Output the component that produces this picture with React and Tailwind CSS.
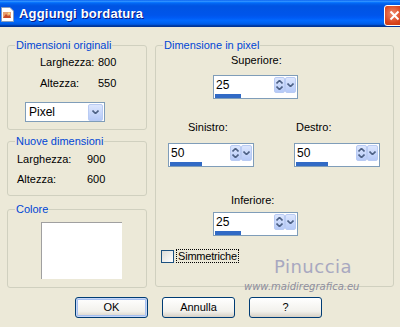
import React from 'react';

const font = "font-['Liberation_Sans',Arial,sans-serif]";

// small chevron used in the combo and spinner buttons
const Chevron = ({ up = false }) => (
  <svg width="7" height="4" viewBox="0 0 7 4" className={up ? 'rotate-180' : ''}>
    <path d="M0.5 0.5 L3.5 3.5 L6.5 0.5" fill="none" stroke="#4D6185" strokeWidth="1.6" />
  </svg>
);

const ComboButton = ({ className = '' }) => (
  <div
    className={`flex items-center justify-center rounded-[2px] border border-[#B9CBF3] bg-[linear-gradient(to_bottom,#DCE6FD,#B6CAF8)] ${className}`}
  >
    <Chevron />
  </div>
);

const Spinner = ({ value, bar, className = '' }) => (
  <div className={`flex flex-col border border-[#7F9DB9] bg-white ${className}`}>
    <div className="flex h-[17px] items-center">
      <span className="flex-1 pl-[2px] text-[12px] leading-none">{value}</span>
      <div className="mt-[1px] flex h-[16px] w-[11px] flex-col items-center justify-center gap-[2px] rounded-[2px] border border-[#B9CBF3] bg-[linear-gradient(to_bottom,#DCE6FD,#B6CAF8)]">
        <Chevron up />
        <Chevron />
      </div>
      <ComboButton className="mr-[1px] mt-[1px] h-[16px] w-[11px]" />
    </div>
    <div className="mt-[1px] h-[4px] pl-[1px]">
      <div className="h-full bg-[#316AC5]" style={{ width: bar }} />
    </div>
  </div>
);

const Group = ({ label, className = '', children }) => (
  <fieldset className={`rounded-[3px] border border-[#D0D0BF] ${className}`}>
    <legend className="ml-[7px] px-[1px] text-[11px] leading-[13px] text-[#0046D5]">{label}</legend>
    {children}
  </fieldset>
);

const XpButton = ({ children, primary = false }) => (
  <button
    className={`flex h-[21px] w-[73px] items-center justify-center rounded-[3px] border border-[#003C74] bg-[linear-gradient(to_bottom,#FFFFFF,#F2F1EC_70%,#D6D0C5)] text-[11px] text-black ${
      primary ? 'shadow-[inset_0_0_0_1px_#C6D6F7,inset_0_0_0_2px_#A6C0F0]' : ''
    }`}
  >
    {children}
  </button>
);

export default function App() {
  return (
    <div className={`relative h-[327px] w-[400px] overflow-hidden bg-[#ECE9D8] text-[11px] text-black ${font}`}>
      {/* Title bar */}
      <div className="flex h-[27px] items-center bg-[linear-gradient(180deg,#0058ee_0%,#3593ff_4%,#288eff_6%,#127dff_8%,#036ffc_10%,#0262ee_14%,#0057e5_20%,#0054e3_24%,#0055eb_56%,#005bf5_66%,#026afe_76%,#0062ef_86%,#0052d6_92%,#0040ab_94%,#003092_100%)]">
        <svg width="14" height="16" viewBox="0 0 14 16" className="ml-[1px]">
          <path d="M0.5 1.5 H9 L12.5 5 V15.5 H0.5 Z" fill="#FFFFFF" stroke="#8A9CB8" />
          <rect x="2" y="6" width="8" height="6" fill="#E8A070" />
          <path d="M2 12 L5 8 L7 10 L8.5 9 L10 12 Z" fill="#C84A2A" />
          <circle cx="8" cy="7.5" r="1" fill="#FFE080" />
        </svg>
        <span className="ml-[4px] text-[13px] font-bold tracking-[0.2px] text-white [text-shadow:1px_1px_0_#0A1883]">
          Aggiungi bordatura
        </span>
        <div className="flex-1" />
        <div className="mr-[-5px] mt-[3px] flex h-[21px] w-[21px] items-center justify-center rounded-[3px] border border-white bg-[radial-gradient(circle_at_40%_40%,#F08A6C,#D9431C_60%,#C0360F)]">
          <svg width="11" height="11" viewBox="0 0 11 11">
            <path d="M1.5 1.5 L9.5 9.5 M9.5 1.5 L1.5 9.5" stroke="white" strokeWidth="2" />
          </svg>
        </div>
      </div>

      {/* Body */}
      <div className="flex pl-[7px] pt-[12px]">
        <div className="flex w-[140px] flex-col">
          <Group label="Dimensioni originali" className="h-[91px]">
            <div className="ml-[32px] mt-[4px] grid grid-cols-[58px_auto] gap-y-[8px] leading-[13px]">
              <span>Larghezza:</span>
              <span>800</span>
              <span>Altezza:</span>
              <span>550</span>
            </div>
            <div className="ml-[17px] mt-[12px] flex h-[20px] w-[80px] items-center border border-[#7F9DB9] bg-white">
              <span className="flex-1 pl-[3px] text-[12px]">Pixel</span>
              <ComboButton className="mr-[1px] h-[17px] w-[15px]" />
            </div>
          </Group>

          <Group label="Nuove dimensioni" className="mt-[5px] h-[61px]">
            <div className="ml-[9px] mt-[5px] grid grid-cols-[70px_auto] gap-y-[7px] leading-[13px]">
              <span>Larghezza:</span>
              <span>900</span>
              <span>Altezza:</span>
              <span>600</span>
            </div>
          </Group>

          <Group label="Colore" className="mt-[7px] h-[85px]">
            <div className="ml-[33px] mt-[6px] h-[57px] w-[81px] border-l border-t border-[#A0A0A0] bg-white" />
          </Group>
        </div>

        <Group label="Dimensione in pixel" className="relative ml-[8px] h-[248px] w-[239px]">
          <div className="flex flex-col">
            <span className="ml-[75px] mt-[2px] leading-[13px]">Superiore:</span>
            <Spinner value="25" bar={26} className="ml-[57px] mt-[8px] w-[85px]" />

            <div className="mt-[22px] flex">
              <div className="ml-[12px] flex flex-col">
                <span className="ml-[20px] leading-[13px]">Sinistro:</span>
                <Spinner value="50" bar={32} className="mt-[9px] w-[86px]" />
              </div>
              <div className="ml-[40px] flex flex-col">
                <span className="ml-[2px] leading-[13px]">Destro:</span>
                <Spinner value="50" bar={32} className="mt-[9px] w-[86px]" />
              </div>
            </div>

            <span className="ml-[75px] mt-[27px] leading-[13px]">Inferiore:</span>
            <Spinner value="25" bar={26} className="ml-[57px] mt-[5px] w-[85px]" />

            <div className="ml-[5px] mt-[13px] flex items-center">
              <div className="h-[13px] w-[13px] border border-[#1C5180] bg-[linear-gradient(135deg,#DCDCD7,#FFFFFF)]" />
              <span className="ml-[2px] border border-dotted border-black px-[1px] leading-[12px] tracking-[-0.2px]">Simmetriche</span>
            </div>
          </div>

          {/* watermark */}
          <span className="absolute left-[118px] top-[204px] font-['DejaVu_Sans',sans-serif] text-[18px] leading-[22px] tracking-[0.5px] text-[#A8A8C0]">
            Pinuccia
          </span>
          <span className="absolute left-[88px] top-[227px] font-['DejaVu_Sans',sans-serif] text-[10px] italic text-[#8E8E9E]">
            www.maidiregrafica.eu
          </span>
        </Group>
      </div>

      {/* Buttons */}
      <div className="ml-[75px] mt-[9px] flex gap-[14px]">
        <XpButton primary>OK</XpButton>
        <XpButton>Annulla</XpButton>
        <XpButton>?</XpButton>
      </div>
    </div>
  );
}
